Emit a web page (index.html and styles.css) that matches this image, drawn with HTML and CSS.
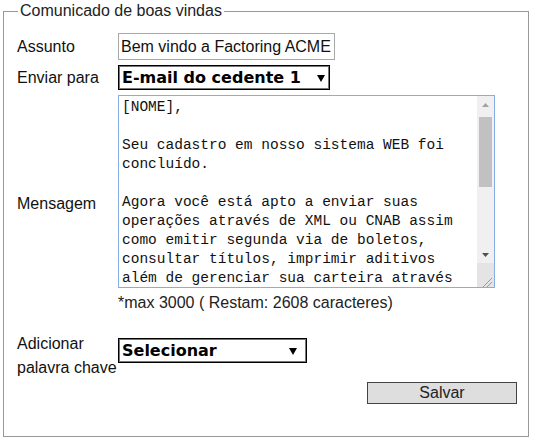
FILE: index.html
```html
<!DOCTYPE html>
<html lang="pt-BR">
<head>
<meta charset="utf-8">
<title>Comunicado de boas vindas</title>
<link rel="stylesheet" href="styles.css">
</head>
<body>
<fieldset class="panel">
  <legend class="panel-title">Comunicado de boas vindas</legend>
  <div class="form">
    <label class="lbl" for="assunto">Assunto</label>
    <div class="ctl">
      <input id="assunto" class="text-input" type="text" value="Bem vindo a Factoring ACME">
    </div>

    <label class="lbl" for="destino">Enviar para</label>
    <div class="ctl">
      <span class="select-wrap sw-dest">
        <select id="destino" class="select sel-dest">
          <option>E-mail do cedente 1</option>
          <option>E-mail do cedente 2</option>
        </select>
      </span>
    </div>

    <label class="lbl" for="mensagem">Mensagem</label>
    <div class="ctl msg">
      <div class="msg-box">
        <textarea id="mensagem" class="message">[NOME],

Seu cadastro em nosso sistema WEB foi concluído.

Agora você está apto a enviar suas operações através de XML ou CNAB assim como emitir segunda via de boletos, consultar títulos, imprimir aditivos além de gerenciar sua carteira através do nosso portal.

Seu usuário de acesso é: [LOGIN]
Sua senha é: [SENHA]

Em caso de dúvidas, entre em contato com a nossa equipe.

Atenciosamente,
Factoring ACME</textarea>
        <div class="vscroll" aria-hidden="true">
          <div class="sb-btn">
            <svg width="7" height="4" viewBox="0 0 7 4"><path d="M0 4L3.5 0L7 4Z" fill="#a3a3a3"/></svg>
          </div>
          <div class="sb-track"><div class="sb-thumb"></div></div>
          <div class="sb-btn">
            <svg width="7" height="4" viewBox="0 0 7 4"><path d="M0 0L7 0L3.5 4Z" fill="#505050"/></svg>
          </div>
          <div class="sb-corner">
            <svg width="17" height="24" viewBox="0 0 17 24">
              <path d="M15 15L6 24M15 19L10 24" stroke="#9a9a9a" stroke-width="1" fill="none"/>
            </svg>
          </div>
        </div>
      </div>
      <div class="note">*max 3000 ( Restam: 2608 caracteres)</div>
    </div>

    <label class="lbl lbl-kw" for="palavra">Adicionar<br>palavra chave</label>
    <div class="ctl ctl-kw">
      <span class="select-wrap sw-kw">
        <select id="palavra" class="select sel-kw">
          <option>Selecionar</option>
          <option>[NOME]</option>
          <option>[LOGIN]</option>
          <option>[SENHA]</option>
        </select>
      </span>
    </div>

    <div class="spacer"></div>
    <div class="ctl actions">
      <button class="btn" type="button">Salvar</button>
    </div>
  </div>
</fieldset>
</body>
</html>
```

FILE: styles.css
```css
html, body {
  margin: 0;
  padding: 0;
  background: #ffffff;
}

body {
  font-family: "Liberation Sans", Arial, sans-serif;
  font-size: 16px;
  color: #111;
}

.panel {
  margin: 2px 4px 0 3px;
  padding: 13px 11px 32px 13px;
  border: 1px solid #999;
  min-width: 0;
}

.panel-title {
  margin-left: 1px;
  padding: 0 2px;
  line-height: 18px;
  font-size: 16px;
  color: #222;
}

.form {
  display: grid;
  grid-template-columns: 101px 1fr;
  row-gap: 5px;
  align-items: center;
}

.lbl {
  line-height: 18px;
  color: #111;
}

.ctl {
  display: flex;
  flex-direction: column;
  align-items: flex-start;
}

.text-input {
  box-sizing: border-box;
  width: 217px;
  height: 27px;
  margin: 0;
  padding: 0 2px;
  border: 1px solid #a8a8a8;
  font-family: "Liberation Sans", Arial, sans-serif;
  font-size: 16px;
  color: #111;
  outline: none;
}

.select-wrap {
  position: relative;
  display: inline-block;
}

.select-wrap::after {
  content: "";
  position: absolute;
  top: 50%;
  margin-top: -3px;
  width: 0;
  height: 0;
  border-left: 4px solid transparent;
  border-right: 4px solid transparent;
  border-top: 7px solid #000;
  pointer-events: none;
}

.sw-dest::after { right: 5px; }
.sw-kw::after { right: 10px; }

.select {
  -webkit-appearance: none;
  appearance: none;
  box-sizing: border-box;
  height: 25px;
  margin: 0;
  padding: 0 0 0 3px;
  border: 1px solid #000;
  box-shadow: inset 0 0 0 1px #777;
  border-radius: 0;
  background: #fff;
  font-family: "DejaVu Sans", Verdana, sans-serif;
  font-weight: bold;
  font-size: 16px;
  color: #000;
  outline: none;
}

.sel-dest { width: 212px; }
.sel-kw { width: 189px; }

.msg-box {
  position: relative;
  width: 377px;
}

.message {
  box-sizing: border-box;
  display: block;
  width: 377px;
  height: 193px;
  margin: 0;
  padding: 2px 27px 2px 3px;
  border: 1px solid #86ade4;
  font-family: "Liberation Mono", "Courier New", monospace;
  font-size: 14.5px;
  line-height: 19px;
  color: #111;
  resize: none;
  overflow: hidden;
  outline: none;
}

.vscroll {
  position: absolute;
  top: 1px;
  right: 1px;
  bottom: 1px;
  width: 17px;
  display: flex;
  flex-direction: column;
  background: #f0f0f0;
}

.sb-btn {
  height: 17px;
  display: flex;
  align-items: center;
  justify-content: center;
  flex: none;
}

.sb-track {
  flex: 1;
  padding: 4px 2px 0 2px;
}

.sb-thumb {
  height: 70px;
  background: #c1c1c1;
}

.sb-corner {
  height: 24px;
  flex: none;
  background: #e4e4e4;
}

.sb-corner svg {
  display: block;
}

.note {
  margin-top: 6px;
  line-height: 18px;
  color: #222;
}

.lbl-kw {
  margin-top: 15px;
  line-height: 24px;
  align-self: start;
}

.ctl-kw {
  margin-top: 21px;
  align-self: start;
}

.actions {
  align-items: flex-end;
  margin-top: -3px;
}

.btn {
  box-sizing: border-box;
  width: 150px;
  height: 22px;
  margin: 0;
  padding: 0;
  border: 1px solid #444;
  border-radius: 0;
  background: #dedede;
  font-family: "Liberation Sans", Arial, sans-serif;
  font-size: 16px;
  line-height: 20px;
  color: #222;
}
```
